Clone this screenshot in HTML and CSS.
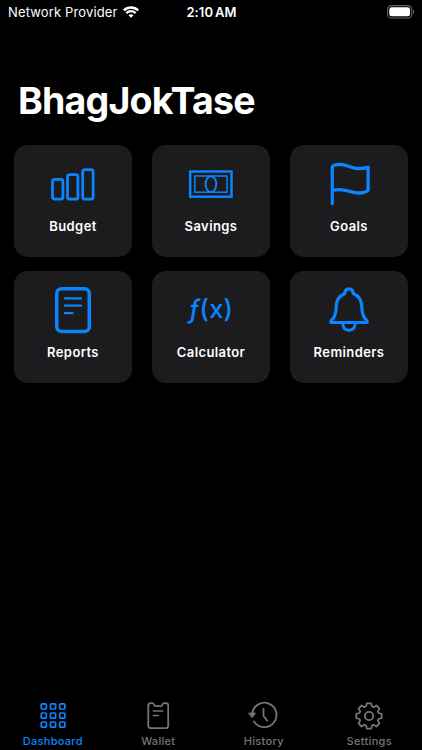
FILE: index.html
```
<!DOCTYPE html>
<html lang="en">
<head>
  <meta charset="UTF-8">
  <meta name="viewport" content="width=device-width, initial-scale=1.0">
  <title>BhagJokTase</title>
  <link rel="stylesheet" href="styles.css">
</head>
<body>

  <header class="status-bar">
    <div class="network">
      <span class="carrier">Network Provider</span>
      <svg width="16" height="12" viewBox="0 0 16 12" fill="none" stroke="#fff" stroke-width="2.3">
        <path d="M0.8 4.4a10.4 10.4 0 0 1 14.4 0M3.3 7.1a6.8 6.8 0 0 1 9.4 0"/>
        <path d="M5.5 9.3a3.7 3.7 0 0 1 5 0L8 11.8z" fill="#fff" stroke="none"/>
      </svg>
    </div>
    <span class="time">2:10 AM</span>
    <div class="battery">
      <svg width="28" height="14" viewBox="0 0 28 14">
        <rect x="0.6" y="0.6" width="24.2" height="12.4" rx="3.8" fill="none" stroke="#666" stroke-width="1.1"/>
        <rect x="2.3" y="2.3" width="20.8" height="9" rx="2.4" fill="#fff"/>
        <path d="M26 4.8c1.8.7 1.8 3.3 0 4z" fill="#666"/>
      </svg>
    </div>
  </header>

  <main>
    <h1>BhagJokTase</h1>

    <div class="cards">
      <div class="card">
        <svg class="card-icon" viewBox="0 0 56 56" stroke-width="2.8">
          <rect x="7.5" y="23.4" width="10.4" height="19.8" rx="2"/>
          <rect x="22.5" y="18.7" width="10.4" height="24.5" rx="2"/>
          <rect x="37.7" y="13.7" width="10.4" height="29.5" rx="2"/>
        </svg>
        <span>Budget</span>
      </div>
      <div class="card">
        <svg class="card-icon" viewBox="0 0 56 56" stroke-width="1.5">
          <rect class="sharp" x="7.2" y="15.5" width="41.3" height="25.2" stroke-width="2.5"/>
          <rect class="sharp" x="11.8" y="20" width="32.2" height="16.2"/>
          <ellipse cx="27.9" cy="28.1" rx="5.4" ry="7.9" stroke-width="1.9"/>
        </svg>
        <span>Savings</span>
      </div>
      <div class="card">
        <svg class="card-icon" viewBox="0 0 56 56" stroke-width="3.3">
          <path d="M11.3 47.5V11.2C11.8 9 15 8.4 19 8.4C28 8.4 31 15.2 47.1 11.3V34.2C45 36.5 41 37 37.5 37C29 36.8 22 31 11.3 34.8"/>
        </svg>
        <span>Goals</span>
      </div>
      <div class="card">
        <svg class="card-icon" viewBox="0 0 56 56" stroke-width="2.3">
          <rect x="11.8" y="6.8" width="32.5" height="42.6" rx="4.5" stroke-width="3.5"/>
          <path d="M20 16.3H36M20 23.7H36M20 31.2H27.5"/>
        </svg>
        <span>Reports</span>
      </div>
      <div class="card">
        <svg class="card-icon" viewBox="0 0 56 56">
          <text class="function" x="28" y="35.5" text-anchor="middle"><tspan class="function-name">ƒ</tspan>(x)</text>
        </svg>
        <span>Calculator</span>
      </div>
      <div class="card">
        <svg class="card-icon" viewBox="0 0 56 56" stroke-width="3.2">
          <path d="M23.6 11.8C24 8.5 25.6 6.8 28 6.8S32 8.5 32.4 11.8C38 14 40.7 19 40.8 25C41 36 44 35.5 46 39C46.8 40.5 46 40.5 45 40.5H11C10 40.5 9.2 40.5 10 39C12 35.5 15 36 15.2 25C15.3 19 18 14 23.6 11.8z"/>
          <path d="M21.8 41.5C22 46 24.6 48.2 28 48.2S34 46 34.2 41.5" stroke-width="2.9"/>
        </svg>
        <span>Reminders</span>
      </div>
    </div>
  </main>

  <nav class="tab-bar">
    <div class="tab active">
      <svg viewBox="0 0 32 32" stroke-width="1.7">
        <rect x="4.2" y="3.8" width="5.2" height="5.2" rx="1"/>
        <rect x="13.4" y="3.8" width="5.2" height="5.2" rx="1"/>
        <rect x="22.7" y="3.8" width="5.2" height="5.2" rx="1"/>
        <rect x="4.2" y="13" width="5.2" height="5.2" rx="1"/>
        <rect x="13.4" y="13" width="5.2" height="5.2" rx="1"/>
        <rect x="22.7" y="13" width="5.2" height="5.2" rx="1"/>
        <rect x="4.2" y="22" width="5.2" height="5.2" rx="1"/>
        <rect x="13.4" y="22" width="5.2" height="5.2" rx="1"/>
        <rect x="22.7" y="22" width="5.2" height="5.2" rx="1"/>
      </svg>
      <span>Dashboard</span>
    </div>
    <div class="tab">
      <svg viewBox="0 0 32 32" stroke-width="1.8">
        <path d="M8.7 3.2H10.8C12 3.2 11.8 6.2 13.8 6.2H18.7C20.7 6.2 20.5 3.2 21.7 3.2H23.8A2.4 2.4 0 0 1 26.2 5.6V25.8A2.4 2.4 0 0 1 23.8 28.2H8.7A2.4 2.4 0 0 1 6.3 25.8V5.6A2.4 2.4 0 0 1 8.7 3.2z"/>
        <path d="M11.3 11H21M11.3 15.5H16.3" stroke-width="1.3"/>
      </svg>
      <span>Wallet</span>
    </div>
    <div class="tab">
      <svg viewBox="0 0 32 32" stroke-width="1.8">
        <path d="M4.2 13.5A12.2 12.2 0 1 1 6 21.5"/>
        <path d="M1 13.1H7.4L4.2 17.5z" fill="currentColor" stroke-width="1"/>
        <path d="M15.5 8.7V16L19.2 20.7"/>
      </svg>
      <span>History</span>
    </div>
    <div class="tab">
      <svg viewBox="-16 -16 32 32" stroke-width="1.8">
        <path d="M-2.2-12.7H2.2L3-9.5L4.6-8.8L7.4-10.5L10.5-7.4L8.8-4.6L9.5-3L12.7-2.2V2.2L9.5 3L8.8 4.6L10.5 7.4L7.4 10.5L4.6 8.8L3 9.5L2.2 12.7H-2.2L-3 9.5L-4.6 8.8L-7.4 10.5L-10.5 7.4L-8.8 4.6L-9.5 3L-12.7 2.2V-2.2L-9.5-3L-8.8-4.6L-10.5-7.4L-7.4-10.5L-4.6-8.8L-3-9.5z"/>
        <circle r="4.2"/>
      </svg>
      <span>Settings</span>
    </div>
  </nav>

</body>
</html>
```
FILE: styles.css
```
* {
  box-sizing: border-box;
}

body {
  display: flex;
  flex-direction: column;
  height: 100vh;
  margin: 0;
  overflow: hidden;
  background-color: #000;
  color: #fff;
  font-family: Inter, Roboto, sans-serif;
}

.status-bar {
  display: grid;
  grid-template-columns: 1fr auto 1fr;
  align-items: center;
  height: 24px;
  padding: 0 7px 0 8px;
  font-size: 13px;
}

.network {
  display: flex;
  align-items: center;
  gap: 5px;
}

.carrier {
  letter-spacing: 0.14px;
}

.time {
  font-weight: 600;
  letter-spacing: 0.1px;
  word-spacing: -1.5px;
}

.battery {
  display: flex;
  justify-content: flex-end;
}

main {
  flex: 1;
  padding: 0 14px;
}

h1 {
  margin: 53px 0 21px;
  padding-left: 4px;
  font-size: 37.5px;
  line-height: 47px;
  letter-spacing: -0.8px;
}

.cards {
  display: grid;
  grid-template-columns: repeat(3, 118px);
  gap: 14px 20px;
}

.card {
  display: flex;
  flex-direction: column;
  align-items: center;
  height: 112px;
  padding-top: 11px;
  border-radius: 14px;
  background-color: #1c1c1e;
  font-size: 13px;
  font-weight: 600;
  letter-spacing: 0.4px;
}

.card span {
  margin-top: 5px;
  line-height: 18px;
}

.card-icon {
  width: 56px;
  height: 56px;
  fill: none;
  stroke: #0a84ff;
  stroke-linecap: round;
  stroke-linejoin: round;
}

.sharp {
  stroke-linejoin: miter;
}

.function {
  fill: #0a84ff;
  stroke: none;
  font-size: 25.5px;
  font-weight: 500;
  letter-spacing: 0.2px;
}

.function-name {
  font-style: italic;
}

.tab-bar {
  display: grid;
  grid-template-columns: repeat(4, 1fr);
  height: 50px;
}

.tab {
  display: flex;
  flex-direction: column;
  align-items: center;
  color: #757575;
  font-size: 11px;
  font-weight: 500;
  letter-spacing: 0.3px;
}

.tab svg {
  width: 32px;
  height: 32px;
  fill: none;
  stroke: currentColor;
  stroke-linecap: round;
  stroke-linejoin: round;
}

.tab span {
  margin-top: 2px;
  line-height: 14px;
}

.active {
  color: #0a84ff;
}
```
